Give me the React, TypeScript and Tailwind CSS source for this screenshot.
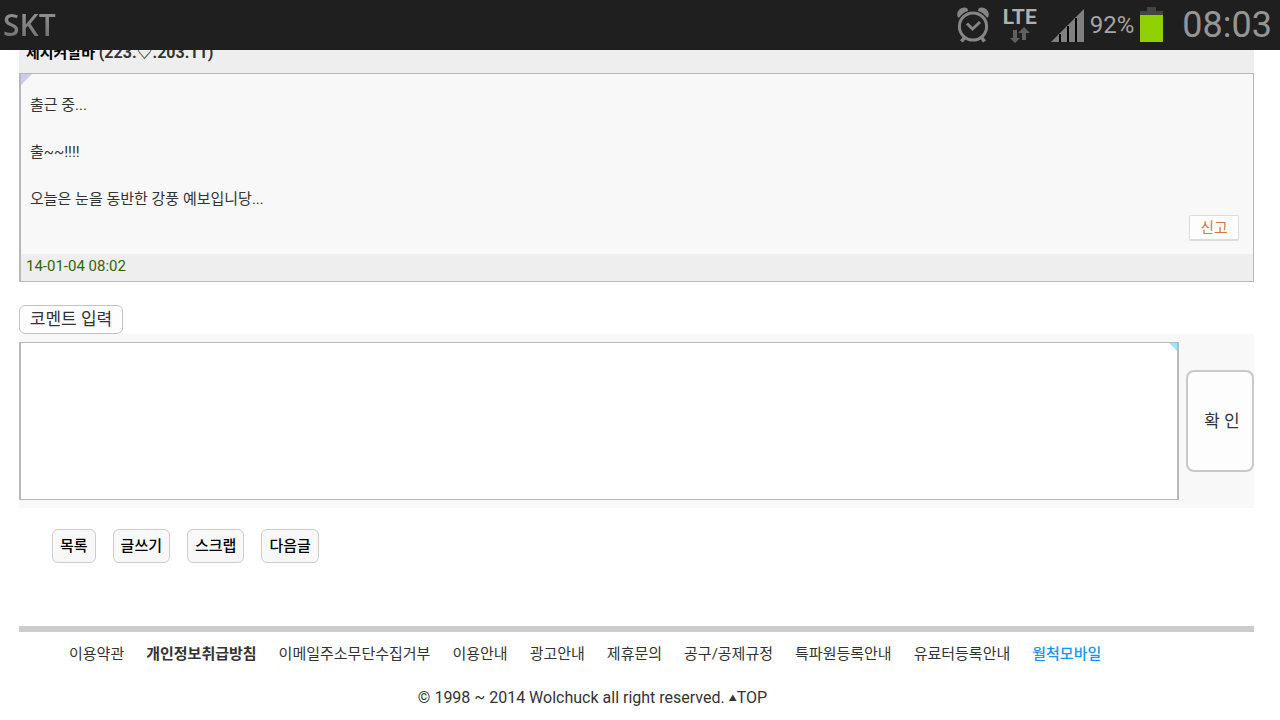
import { ReactNode } from 'react'

const footerLinks = [
  { label: '이용약관' },
  { label: '개인정보취급방침', className: 'font-bold' },
  { label: '이메일주소무단수집거부' },
  { label: '이용안내' },
  { label: '광고안내' },
  { label: '제휴문의' },
  { label: '공구/공제규정' },
  { label: '특파원등록안내' },
  { label: '유료터등록안내' },
  { label: '월척모바일', className: 'font-medium text-[#1496f5]' },
]

const actions = ['목록', '글쓰기', '스크랩', '다음글']

function AlarmIcon() {
  return (
    <svg width="34" height="36" viewBox="0 0 34 36" fill="none" stroke="#858585" aria-label="알람">
      <circle cx="17" cy="19.5" r="13.6" strokeWidth="3" />
      <path d="M11 16.5l5.5 5.5 7.5-7" strokeWidth="3" />
      <path d="M8.5 30.5L5.5 34.5M25.5 30.5l3 4" strokeWidth="3.6" />
      <path d="M1.6 9.4C-.4 4.4 6-1.6 11.4 1.4L12.2 4C8 5.2 5 7.6 2.8 11zM32.4 9.4C34.4 4.4 28-1.6 22.6 1.4L21.8 4c4.2 1.2 7.2 3.6 9.4 7z" fill="#858585" stroke="none" />
    </svg>
  )
}

function SignalIcon() {
  return (
    <svg width="33" height="33" viewBox="0 0 33 33" aria-label="신호">
      <path d="M0 33L33 0v33z" fill="#808080" />
      <path d="M8 25h2v8H8zM16 17h2v16h-2zM24 9h2v24h-2z" fill="#050505" />
    </svg>
  )
}

function StatusBar() {
  return (
    <header className="flex h-[50px] items-center bg-[#1f1f1f] pl-[3px] pr-2 font-[Roboto,'Noto_Sans_CJK_KR',sans-serif]">
      <span className="bg-linear-to-b from-[#a0a0a0] to-[#666] bg-clip-text font-['Open_Sans',sans-serif] text-[30px] leading-[50px] font-semibold text-transparent">
        SKT
      </span>
      <div className="ml-auto flex items-center">
        <AlarmIcon />
        <div className="ml-3 flex w-9 flex-col items-center">
          <span className="text-[21px] leading-[20px] font-bold text-[#b0b0b0]">LTE</span>
          <svg width="20" height="16" viewBox="0 0 20 16" fill="#606060">
            <path d="M3 3h4v8h3l-5 5-5-5h3z" />
            <path d="M12 13h4V6h4l-6-6-6 6h4z" />
          </svg>
        </div>
        <div className="ml-[13px]">
          <SignalIcon />
        </div>
        <span className="ml-1.5 text-2xl text-[#a5a5a5]">92%</span>
        <svg className="mb-0.5 ml-1.5" width="23" height="35" viewBox="0 0 23 35" aria-label="배터리">
          <path d="M7 0h9v4h7v4H0V4h7z" fill="#444" />
          <path d="M0 8h23v27H0z" fill="#90d000" />
        </svg>
        <span className="ml-[19px] text-4xl text-[#959595]">08:03</span>
      </div>
    </header>
  )
}

function BoxButton({ className, children }: { className: string; children: ReactNode }) {
  return (
    <button type="button" className={`bg-[#fdfdfd] ${className}`}>
      {children}
    </button>
  )
}

export default function App() {
  return (
    <div className="bg-white font-[Roboto,'Noto_Sans_CJK_KR',sans-serif] text-[15px] text-[#333]">
      <StatusBar />

      <main className="ml-[19px] mr-[26px]">
        <article>
          {/* title row is scrolled partly under the status bar */}
          <div className="flex h-[23px] items-end overflow-hidden bg-[#eee] px-[7px]">
            <h2 className="leading-10 font-bold">
              <span className="text-black">세시켜알바</span> <span className="text-[16px]">(223.♡.203.11)</span>
            </h2>
          </div>
          <div className="relative border border-l-2 border-[#b8b8b8] bg-[#f8f8f8]">
            <span className="absolute top-0 left-0 size-[11px] bg-[#cccdee] [clip-path:polygon(0_0,100%_0,0_100%)]" />
            <div className="px-[9px] pt-5 leading-[23px]">
              <p>출근 중...</p>
              <p className="mt-6">출~~!!!!</p>
              <p className="mt-6">오늘은 눈을 동반한 강풍 예보입니당...</p>
            </div>
            <div className="flex justify-end pt-1 pr-[14px] pb-[13px]">
              <BoxButton className="h-[26px] w-[50px] rounded-xs border border-b-2 border-[#dcdcdc] text-[#d57a3d]">
                <span className="block leading-[22px]">신고</span>
              </BoxButton>
            </div>
            <div className="bg-[#eee] px-[5px] text-[#360]">
              <time className="block pb-0.5 leading-[25px]">14-01-04 08:02</time>
            </div>
          </div>
        </article>

        <form className="mt-[23px]">
          <label
            htmlFor="comment"
            className="block h-[29px] w-[104px] rounded-md border border-[#c3c3c3] bg-[#fdfdfd] text-center text-[17px] leading-[27px]"
          >
            코멘트 입력
          </label>
          <div className="flex items-center gap-[7px] bg-[#f8f8f8] py-2">
            <div className="relative flex-1">
              <textarea
                id="comment"
                className="block h-[158px] w-full resize-none border border-x-2 border-[#b8b8b8] bg-white p-2 outline-none"
              />
              <span className="absolute top-px right-0.5 size-2 bg-[#a0e5ff] [clip-path:polygon(0_0,100%_0,100%_100%)]" />
            </div>
            <BoxButton className="h-[102px] w-[68px] rounded-lg border-2 border-[#c8c8c8] pt-0.5 pl-1 text-[17px]">
              확 인
            </BoxButton>
          </div>
        </form>

        <nav className="mt-[21px] ml-[33px] flex gap-[17px]">
          {actions.map((label) => (
            <a
              key={label}
              href="#"
              className="rounded-md border border-[#ccc] bg-[#f8f8f8] px-[7px] leading-8 font-medium text-black"
            >
              {label}
            </a>
          ))}
        </nav>

        <footer className="mt-[63px] border-t-[6px] border-[#ccc]">
          <nav className="flex flex-wrap gap-x-[22px] pt-2.5 pl-[50px] leading-6">
            {footerLinks.map((link) => (
              <a key={link.label} href="#" className={link.className}>
                {link.label}
              </a>
            ))}
          </nav>
          <p className="mt-5 pr-[88px] pb-2 text-center text-[16px] leading-6">
            © 1998 ~ 2014 Wolchuck all right reserved.{' '}
            <a href="#">
              <span className="align-[2px] text-[8px]">▲</span>TOP
            </a>
          </p>
        </footer>
      </main>
    </div>
  )
}
